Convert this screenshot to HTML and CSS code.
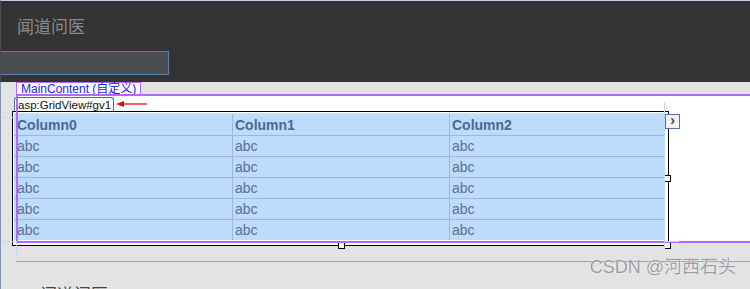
FILE: index.html
```html
<!DOCTYPE html>
<html lang="zh-CN">
	<head>
		<meta charset="UTF-8" />
		<meta name="viewport" content="width=device-width, initial-scale=1.0" />
		<title>闻道问医</title>
		<link rel="stylesheet" href="styles.css">
	</head>
	<body>
		<header class="site-header">
			<div class="site-title">闻道问医</div>
			<div class="search-box"></div>
		</header>
		<main class="canvas">
			<div class="region-tab">MainContent (自定义)</div>
			<section class="region">
				<div class="control-tag-row">
					<span class="control-tag">asp:GridView#gv1</span>
					<svg class="tag-arrow" width="32" height="8" viewBox="0 0 32 8">
						<line x1="6" y1="4" x2="31" y2="4" stroke="#e01010" stroke-width="1.3" />
						<polygon points="0,4 8,1 8,7" fill="#e01010" />
					</svg>
				</div>
				<div class="grid-frame">
					<div class="grid">
						<div class="grid-row grid-head">
							<div class="cell">Column0</div>
							<div class="cell">Column1</div>
							<div class="cell">Column2</div>
						</div>
						<div class="grid-row">
							<div class="cell">abc</div>
							<div class="cell">abc</div>
							<div class="cell">abc</div>
						</div>
						<div class="grid-row">
							<div class="cell">abc</div>
							<div class="cell">abc</div>
							<div class="cell">abc</div>
						</div>
						<div class="grid-row">
							<div class="cell">abc</div>
							<div class="cell">abc</div>
							<div class="cell">abc</div>
						</div>
						<div class="grid-row">
							<div class="cell">abc</div>
							<div class="cell">abc</div>
							<div class="cell">abc</div>
						</div>
						<div class="grid-row grid-last">
							<div class="cell">abc</div>
							<div class="cell">abc</div>
							<div class="cell">abc</div>
						</div>
					</div>
					<span class="smart-tag">&rsaquo;</span>
					<span class="handle handle-right"></span>
					<span class="handle handle-bottom"></span>
					<span class="handle handle-corner"></span>
				</div>
			</section>
			<hr class="rule" />
			<div class="footer-brand"><span class="brand-icon"></span>闻道问医</div>

			<!-- designer guide lines -->
			<span class="guide guide-v-right"></span>
			<span class="guide guide-h-top"></span>
			<span class="guide guide-h-bottom"></span>
			<span class="guide guide-v-left"></span>
			<span class="guide guide-h-right"></span>

			<div class="watermark">CSDN @河西石头</div>
		</main>
	</body>
</html>
```

FILE: styles.css
```css
body {
	margin: 0;
	width: 750px;
	height: 289px;
	overflow: hidden;
	background: #e3e3e3;
	font-family: "Liberation Sans", Arial, "Noto Sans CJK SC", sans-serif;
}
.site-header {
	box-sizing: border-box;
	height: 82px;
	padding-top: 14px;
	background: #333333;
	border-top: 1px solid #d9c2e6;
	border-left: 1px solid #4c4c4c;
}
.site-title {
	margin-left: 16px;
	height: 22px;
	line-height: 22px;
	font-size: 17px;
	color: #8a8a8a;
	font-family: "Noto Sans CJK SC", sans-serif;
}
.search-box {
	box-sizing: border-box;
	margin-top: 14px;
	width: 168px;
	height: 24px;
	background: #4a4d51;
	border: 1px solid #5f7fa8;
	border-left: none;
}
.canvas {
	position: relative;
	height: 207px;
	border-left: 1px solid #8595b4;
}
.region-tab {
	box-sizing: border-box;
	width: max-content;
	margin-left: 15px;
	height: 12px;
	padding: 0 4px 0 4px;
	line-height: 12px;
	font-size: 12px;
	color: #2323f0;
	background: #ffffff;
	border: 1px solid #b26ff2;
	border-bottom: none;
	overflow: visible;
}
.region {
	position: relative;
	box-sizing: border-box;
	margin-left: 15px;
	height: 149px;
	padding-top: 3px;
	background: #ffffff;
}
/* purple region outline drawn over the grid */
.region::after {
	content: "";
	position: absolute;
	inset: 0;
	border-top: 2px solid #b169f6;
	border-left: 2px solid #b169f6;
	border-bottom: 2px solid #b169f6;
	z-index: 3;
	pointer-events: none;
}
.control-tag-row {
	display: flex;
	align-items: center;
	margin-left: -2px;
	height: 14px;
}
.control-tag {
	box-sizing: border-box;
	height: 14px;
	padding: 0 2px 0 3px;
	font-size: 11.5px;
	line-height: 14px;
	color: #111111;
	background: #ffffff;
	border: 1px solid #3f6dae;
	border-bottom: none;
	border-radius: 3px 3px 0 0;
}
.tag-arrow {
	margin-left: 2px;
}
.grid-frame {
	position: relative;
	box-sizing: border-box;
	margin-left: -4px;
	width: 657px;
	height: 135px;
	padding: 1px 3px 0 1px;
	background: #ffffff;
	border: 1px solid #000000;
	z-index: 2;
}
.grid {
	background: #bddbfb;
	border-top: 1px solid #cfe3fb;
}
.grid-row {
	display: grid;
	grid-template-columns: 218px 217px 1fr;
	box-sizing: border-box;
	height: 21px;
	border-bottom: 1px solid #9bb8d8;
	font-size: 14px;
	line-height: 20px;
	color: #5b7092;
}
.grid-head {
	height: 22px;
	line-height: 22px;
	font-weight: bold;
	color: #4f6890;
}
.grid-last {
	border-bottom: none;
	height: 20px;
}
.cell {
	padding-left: 3px;
}
.cell + .cell {
	padding-left: 2px;
	border-left: 1px solid #9bb8d8;
}
.smart-tag {
	position: absolute;
	left: 652px;
	top: 2px;
	box-sizing: border-box;
	width: 15px;
	height: 15px;
	background: #f1f1f1;
	border: 1px solid #4b73b7;
	font-size: 14px;
	line-height: 11px;
	text-align: center;
	color: #38485e;
	font-weight: bold;
	z-index: 4;
}
.handle {
	position: absolute;
	box-sizing: border-box;
	width: 7px;
	height: 7px;
	background: #ffffff;
	border: 1px solid #000000;
	z-index: 4;
}
.handle-right {
	left: 651px;
	top: 63px;
}
.handle-bottom {
	left: 325px;
	top: 130px;
}
.handle-corner {
	left: 651px;
	top: 130px;
}
.rule {
	margin: 18px 0 0 15px;
	border: none;
	border-top: 1px solid #a3a3a3;
}
.footer-brand {
	display: flex;
	align-items: center;
	margin: 21px 0 0 16px;
	font-family: "Noto Sans CJK SC", sans-serif;
	font-size: 17px;
	line-height: 22px;
	color: #444444;
}
.brand-icon {
	box-sizing: border-box;
	width: 10px;
	height: 10px;
	margin-right: 13px;
	border: 2px solid #444444;
	border-radius: 50%;
}
.guide {
	position: absolute;
	background: #c3daf6;
	z-index: 5;
}
.guide-v-right {
	left: 663px;
	top: 20px;
	width: 1px;
	height: 147px;
}
.guide-h-top {
	left: 2px;
	top: 35px;
	width: 11px;
	height: 1px;
}
.guide-h-bottom {
	left: 2px;
	top: 159px;
	width: 12px;
	height: 1px;
}
.guide-v-left {
	left: 15px;
	top: 159px;
	width: 1px;
	height: 17px;
}
.guide-h-right {
	left: 663px;
	top: 159px;
	width: 15px;
	height: 1px;
}
.watermark {
	position: absolute;
	right: 14px;
	top: 174px;
	font-size: 18px;
	line-height: 22px;
	color: #9c9c9c;
	text-shadow: 0 0 1px #ffffff, 0 0 1px #ffffff;
	font-family: "Liberation Sans", "Noto Sans CJK SC", sans-serif;
	z-index: 6;
}
```
